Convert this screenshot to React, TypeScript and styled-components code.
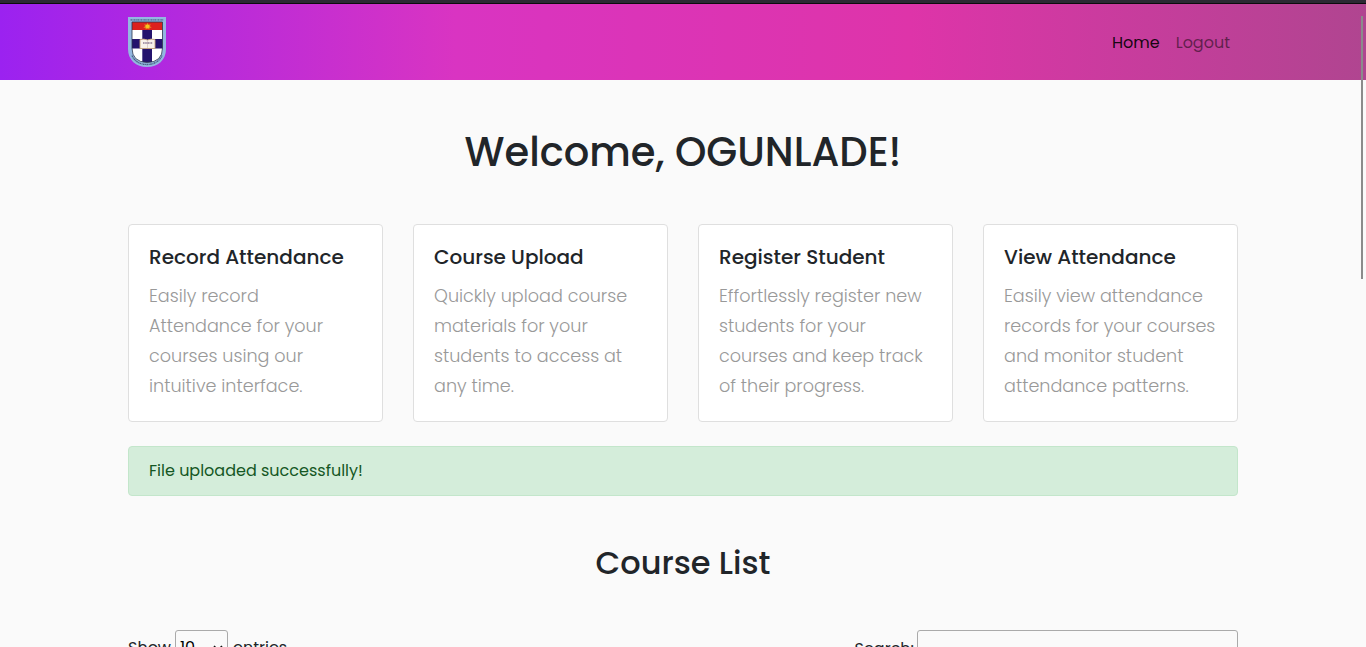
import React from "react";
import styled, { createGlobalStyle } from "styled-components";

const GlobalStyle = createGlobalStyle`
  *, *::before, *::after { box-sizing: border-box; }
  html, body { height: 100%; overflow: hidden; }
  body {
    margin: 0;
    background: #fafafa;
    color: #212529;
    font-family: Poppins, Inter, "Liberation Sans", sans-serif;
    font-size: 16px;
    line-height: 1.5;
  }
`;

const Page = styled.div`
  position: relative;
  height: 647px;
  overflow: hidden;
`;

const TopEdge = styled.div`
  height: 4px;
  background: #2b2a33;
  border-bottom: 1px solid #0c0c0d;
`;

const NavBar = styled.nav`
  height: 76px;
  background: linear-gradient(90deg, #9b22f0 0%, #d934c2 33.3%, #de34a9 66.6%, #b04590 100%);
`;

const Container = styled.div`
  width: 1110px;
  margin: 0 auto;
`;

const NavRow = styled(Container)`
  display: flex;
  align-items: center;
  justify-content: space-between;
  height: 100%;
`;

const NavLinks = styled.div`
  display: flex;
  gap: 16px;
  padding: 2px 8px 0 0;
`;

const NavLink = styled.a<{ $active?: boolean }>`
  color: ${(p) => (p.$active ? "rgba(0,0,0,.9)" : "rgba(0,0,0,.5)")};
`;

const Title = styled.h1`
  margin: 48px 0;
  text-align: center;
  font-size: 40px;
  line-height: 48px;
  font-weight: 500;
`;

const SubTitle = styled.h2`
  margin: 48px 0;
  text-align: center;
  font-size: 32px;
  line-height: 38px;
  font-weight: 500;
`;

const CardGrid = styled.div`
  display: grid;
  grid-template-columns: repeat(4, 1fr);
  gap: 30px;
`;

const Card = styled.article`
  height: 198px;
  padding: 20px;
  background: #fff;
  border: 1px solid #dfdfdf;
  border-radius: 4px;
`;

const CardTitle = styled.h5`
  margin: 0 0 12px;
  font-size: 20px;
  line-height: 24px;
  font-weight: 500;
`;

const CardText = styled.p`
  margin: 0;
  color: #999;
  font-size: 17.6px;
  line-height: 30px;
  font-weight: 300;
`;

const Alert = styled.div`
  height: 50px;
  margin-top: 24px;
  padding: 12px 20px;
  color: #155724;
  background: #d4edda;
  border: 1px solid #c3e6cb;
  border-radius: 4px;
`;

const Controls = styled.div`
  display: flex;
  justify-content: space-between;
`;

const Label = styled.label<{ $height: number }>`
  display: flex;
  align-items: center;
  height: ${(p) => p.$height}px;
`;

const Select = styled.span`
  display: flex;
  align-items: center;
  justify-content: space-between;
  width: 53px;
  height: 35px;
  margin: 0 5px 0 4px;
  padding: 0 4px;
  color: #000;
  border: 1px solid #aaa;
  border-radius: 3px;

  svg { margin-top: 2px; }
`;

const SearchInput = styled.input`
  width: 321px;
  height: 37px;
  margin-left: 3px;
  background: transparent;
  border: 1px solid #aaa;
  border-radius: 3px;
`;

const ScrollThumb = styled.div`
  position: absolute;
  top: 16px;
  right: 3px;
  width: 2px;
  height: 263px;
  background: #8b8b8b;
`;

const Crest = () => (
  <svg width="38" height="50" viewBox="0 0 38 50" aria-label="University crest">
    <defs>
      <clipPath id="shield">
        <path d="M4 5H34.5V31Q34.5 45 19.2 45.5Q4 45 4 31Z" />
      </clipPath>
    </defs>
    <path d="M0 0H38V32C38 43 30 50 19 50S0 43 0 32Z" fill="#93b7e0" />
    <g clipPath="url(#shield)">
      <path d="M4 5H35V46H4Z" fill="#fff" />
      <path d="M4 5H35V13H4Z" fill="#dc211d" />
      <path d="M14.3 13H24V46H14.3ZM4 22H35V31.5H4Z" fill="#24136d" />
    </g>
    <path d="M4 5H34.5V31Q34.5 45 19.2 45.5Q4 45 4 31Z" fill="none" stroke="#29364d" strokeWidth=".8" />
    <path d="M2.5 2.8H35.5" stroke="#4a6588" strokeWidth="1.8" strokeDasharray="1.7 .5 .8 .4" opacity=".7" />
    <path d="M4 38.5Q8 47.3 19 47.5Q30 47.3 34 38.5" fill="none" stroke="#33496a" strokeWidth="1.3" strokeDasharray="1.8 .5 .9 .4" opacity=".75" />
    <path d="M19.5 5.8l1 2 2.2-.6-.8 2 1.8 1.2-2.2.5-.2 1.6-1.8-.9-1.8.9-.2-1.6-2.2-.5 1.8-1.2-.8-2 2.2.6Z" fill="#e8871d" />
    <circle cx="19.5" cy="9.4" r="1.8" fill="#f7c51e" />
    <path d="M12 22.5Q16 21.5 19.5 23Q23 21.5 27 22.5V31.5H12Z" fill="#f8f1ea" stroke="#c6a47b" strokeWidth=".9" />
    <path d="M19.5 23V31" stroke="#c9b7b5" strokeWidth=".6" />
    <path d="M15 26H24.5" stroke="#755f83" strokeWidth="1.4" strokeDasharray="1.2 .4" opacity=".8" />
  </svg>
);

const Chevron = () => (
  <svg width="10" height="7" viewBox="0 0 10 7">
    <path d="M1 1L5 5L9 1" fill="none" stroke="#111" strokeWidth="1.5" />
  </svg>
);

const cards = [
  { title: "Record Attendance", text: "Easily record Attendance for your courses using our intuitive interface." },
  { title: "Course Upload", text: "Quickly upload course materials for your students to access at any time." },
  { title: "Register Student", text: "Effortlessly register new students for your courses and keep track of their progress." },
  { title: "View Attendance", text: "Easily view attendance records for your courses and monitor student attendance patterns." },
];

export default function App() {
  return (
    <Page>
      <GlobalStyle />
      <TopEdge />
      <NavBar>
        <NavRow>
          <Crest />
          <NavLinks>
            <NavLink $active>Home</NavLink>
            <NavLink>Logout</NavLink>
          </NavLinks>
        </NavRow>
      </NavBar>
      <Container>
        <Title>Welcome, OGUNLADE!</Title>
        <CardGrid>
          {cards.map((card) => (
            <Card key={card.title}>
              <CardTitle>{card.title}</CardTitle>
              <CardText>{card.text}</CardText>
            </Card>
          ))}
        </CardGrid>
        <Alert>File uploaded successfully!</Alert>
        <SubTitle>Course List</SubTitle>
        <Controls>
          <Label $height={35}>
            <span>Show</span>
            <Select>10<Chevron /></Select>
            <span>entries</span>
          </Label>
          <Label $height={37}>
            <span>Search:</span>
            <SearchInput />
          </Label>
        </Controls>
      </Container>
      <ScrollThumb />
    </Page>
  );
}
